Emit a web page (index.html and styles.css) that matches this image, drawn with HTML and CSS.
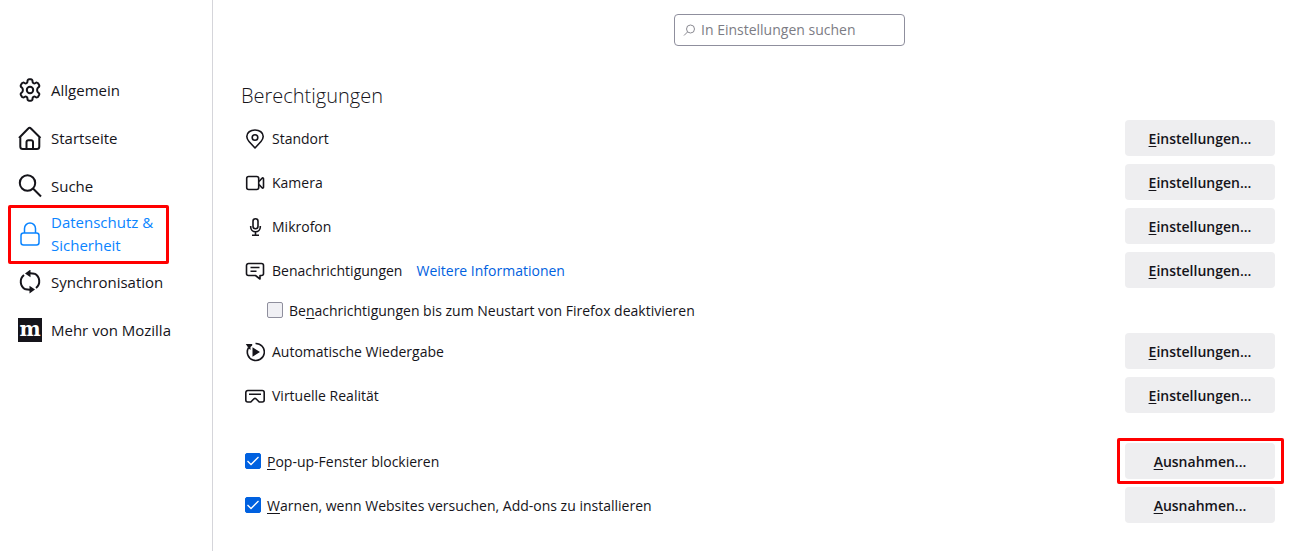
FILE: index.html
```html
<!DOCTYPE html>
<html lang="de">
<head>
  <meta charset="UTF-8" />
  <meta name="viewport" content="width=device-width, initial-scale=1.0" />
  <title>Einstellungen</title>
  <link rel="stylesheet" href="styles.css">
</head>
<body>

  <nav class="sidebar">
    <a class="category" href="#allgemein">
      <svg class="category-icon" viewBox="0 0 24 24"><path d="M9.500 3.200a1.800 1.800 0 0 1 1.700-2h1.600a1.800 1.800 0 0 1 1.700 2c0 1.900 1.500 2.700 3.100 1.800a1.800 1.800 0 0 1 2.600.4l.9 1.500a1.800 1.800 0 0 1-.8 2.500c-1.600 1-1.600 4.200 0 5.200a1.800 1.800 0 0 1 .8 2.500l-.9 1.500a1.800 1.800 0 0 1-2.600.4c-1.600-.9-3.100-.1-3.100 1.800a1.800 1.800 0 0 1-1.700 2h-1.600a1.800 1.800 0 0 1-1.700-2c0-1.900-1.500-2.700-3.100-1.800a1.800 1.800 0 0 1-2.600-.4l-.9-1.500a1.800 1.800 0 0 1 .8-2.500c1.600-1 1.600-4.200 0-5.200a1.800 1.800 0 0 1-.8-2.500l.9-1.500A1.800 1.800 0 0 1 6.400 5c1.600.9 3.100.1 3.100-1.800z"/><circle cx="12" cy="12" r="3.200"/></svg>
      <span>Allgemein</span>
    </a>
    <a class="category" href="#startseite">
      <svg class="category-icon" viewBox="0 0 24 24"><path d="M1 12 10.500 2.200a1.500 1.500 0 0 1 2.200 0L22.500 12M2.300 11v9.500a2.500 2.500 0 0 0 2.500 2.500h14a2.500 2.500 0 0 0 2.500-2.500V11M8.500 22.500V16a1.800 1.800 0 0 1 1.800-1.800h2.900A1.800 1.800 0 0 1 15 16v6.500"/></svg>
      <span>Startseite</span>
    </a>
    <a class="category" href="#suche">
      <svg class="category-icon" viewBox="0 0 24 24"><circle cx="9.500" cy="9" r="7.700"/><path d="m15 14.500 8 8"/></svg>
      <span>Suche</span>
    </a>
    <a class="category selected" href="#datenschutz">
      <svg class="category-icon" viewBox="0 0 24 24"><rect x="3" y="11" width="18" height="12" rx="2.500"/><path d="M6.500 11V6.500a5.500 5.500 0 0 1 11 0V11"/></svg>
      <span>Datenschutz &amp; Sicherheit</span>
    </a>
    <a class="category" href="#sync">
      <svg class="category-icon" viewBox="0 0 24 24"><path d="M7.500 19.300A8.500 8.500 0 0 1 6 5M16.500 3.700A8.500 8.500 0 0 1 18 18M11 3.300c1.500-.1 3.500 0 5.500.4M13 19.700c-1.500.1-3.500 0-5.500-.4"/><path class="solid" d="M12.500-.5v7.700L7 3.400zM11.500 23.500v-7.700l5.500 3.800z"/></svg>
      <span>Synchronisation</span>
    </a>
    <a class="category" href="#mozilla">
      <svg class="category-icon" viewBox="0 0 24 24"><rect class="solid" width="24" height="24"/><text class="mark" x="12" y="18" text-anchor="middle">m</text></svg>
      <span>Mehr von Mozilla</span>
    </a>
  </nav>

  <main class="content">
    <div class="search-row">
      <label class="search-box">
        <svg class="search-icon" viewBox="0 0 13 13"><circle cx="7.500" cy="5" r="4"/><path d="M4.500 8 1 11.500"/></svg>
        <input class="search-input" type="search" placeholder="In Einstellungen suchen" aria-label="In Einstellungen suchen" />
      </label>
    </div>

    <h1 class="heading">Berechtigungen</h1>

    <div class="row">
      <svg class="icon" viewBox="0 0 20 20"><path d="M10 19 4 12.500a8 8 0 0 1-2.200-5C1.800 3.500 5.500 1 10 1s8.200 2.500 8.200 6.500a8 8 0 0 1-2.200 5z"/><circle cx="10" cy="8.500" r="2.800"/></svg>
      <span class="label">Standort</span>
      <button class="button"><u>E</u>instellungen...</button>
    </div>
    <div class="row">
      <svg class="icon" viewBox="0 0 20 20"><rect x="1.700" y="3.500" width="12" height="13" rx="2"/><path d="m14 8.500 3-3.300c.6-.6 1.500-.3 1.500.5v8.600c0 .8-.9 1.100-1.500.5l-3-3.300"/></svg>
      <span class="label">Kamera</span>
      <button class="button"><u>E</u>instellungen...</button>
    </div>
    <div class="row">
      <svg class="icon" viewBox="0 0 20 20"><rect x="8" y="1.800" width="5" height="10" rx="2.500"/><path d="M5.700 9v1a4.800 4.800 0 0 0 9.600 0V9M10.500 15v3M7 18.200h7"/></svg>
      <span class="label">Mikrofon</span>
      <button class="button"><u>E</u>instellungen...</button>
    </div>
    <div class="row">
      <svg class="icon" viewBox="0 0 20 20"><path d="M3.500 2.500h13a2 2 0 0 1 2 2v8a2 2 0 0 1-2 2H15V18l-4.500-3.500h-7a2 2 0 0 1-2-2v-8a2 2 0 0 1 2-2zM5.500 6.500h9M5.500 10.200h6"/></svg>
      <span class="label">Benachrichtigungen</span>
      <a class="link" href="#info">Weitere Informationen</a>
      <button class="button"><u>E</u>instellungen...</button>
    </div>
    <div class="row indent">
      <input class="checkbox" type="checkbox" id="pause" />
      <label for="pause">Be<u>n</u>achrichtigungen bis zum Neustart von Firefox deaktivieren</label>
    </div>
    <div class="row">
      <svg class="icon" viewBox="0 0 20 20"><path d="M10.500 1.500a8.500 8.500 0 1 1-7 4.200"/><path class="solid" d="M7.500 5.200 15 10l-7.500 4.800zM.8 2h6.400v1.500L5.500 5v3L3.800 6.500z"/></svg>
      <span class="label">Automatische Wiedergabe</span>
      <button class="button"><u>E</u>instellungen...</button>
    </div>
    <div class="row">
      <svg class="icon" viewBox="0 0 20 20"><path d="M2.800 4.500h14.400a2 2 0 0 1 2 2V14a2 2 0 0 1-2 2h-3L11 12.800a1.500 1.500 0 0 0-2 0L5.800 16h-3a2 2 0 0 1-2-2V6.500a2 2 0 0 1 2-2zM4 8.200h12"/></svg>
      <span class="label">Virtuelle Realität</span>
      <button class="button"><u>E</u>instellungen...</button>
    </div>

    <div class="row group-start">
      <input class="checkbox" type="checkbox" id="popup" checked />
      <label for="popup"><u>P</u>op-up-Fenster blockieren</label>
      <button class="button marked"><u>A</u>usnahmen...</button>
    </div>
    <div class="row">
      <input class="checkbox" type="checkbox" id="addons" checked />
      <label for="addons"><u>W</u>arnen, wenn Websites versuchen, Add-ons zu installieren</label>
      <button class="button"><u>A</u>usnahmen...</button>
    </div>
  </main>

</body>
</html>
```
FILE: styles.css
```css
* {
  box-sizing: border-box;
}

body {
  margin: 0;
  min-height: 100vh;
  display: flex;
  background: #fff;
  color: #15141a;
  font-family: "Open Sans", "Noto Sans", sans-serif;
  font-size: 14px;
  line-height: 22px;
}

svg {
  flex: none;
  fill: none;
  stroke: currentColor;
  stroke-linejoin: round;
}

.solid {
  fill: currentColor;
  stroke: none;
}

u {
  text-underline-offset: 2px;
}

/* Sidebar */
.sidebar {
  flex: none;
  width: 213px;
  padding-top: 66px;
  border-right: 1px solid #d5d5da;
}

.category {
  position: relative;
  display: flex;
  align-items: center;
  gap: 9px;
  height: 48px;
  padding: 0 32px 0 18px;
  color: inherit;
  font-size: 15px;
  line-height: 23px;
  text-decoration: none;
}

.category-icon {
  width: 24px;
  height: 24px;
  stroke-width: 2;
}

.mark {
  fill: #fff;
  stroke: none;
  font-family: "DejaVu Serif", serif;
  font-size: 20px;
  font-weight: bold;
}

.selected {
  padding-right: 48px;
  color: #0a84ff;
}

.selected .category-icon {
  stroke-width: 1.5;
}

.selected::after,
.marked::after {
  content: "";
  position: absolute;
  border: 3px solid #f00;
  border-radius: 2px;
}

.selected::after {
  inset: -5px 43px -6px 8px;
}

/* Main pane */
.content {
  flex: 1;
  padding: 14px 24px 28px 28px;
}

.search-row {
  display: flex;
  justify-content: flex-end;
  max-width: 664px;
}

.search-box {
  display: flex;
  align-items: center;
  gap: 5px;
  width: 231px;
  height: 32px;
  padding: 0 8px;
  border: 1px solid #8f8f9d;
  border-radius: 4px;
  color: #8a8a92;
}

.search-icon {
  width: 13px;
  height: 13px;
}

.search-input {
  flex: 1;
  min-width: 0;
  padding: 0;
  border: 0;
  outline: 0;
  background: none;
  font: inherit;
}

.search-input::placeholder {
  color: #7c7c84;
}

.heading {
  margin: 34px 0 9px;
  font-size: 20px;
  font-weight: 300;
  line-height: 31px;
}

.row {
  display: flex;
  align-items: center;
  gap: 6px;
  min-height: 36px;
  margin-bottom: 8px;
  padding-left: 4px;
}

.row .icon,
.row span,
.row a,
.row label {
  margin-top: 2px;
}

.icon {
  width: 20px;
  height: 20px;
  stroke-width: 1.6;
}

.label {
  margin-left: 1px;
}

.link {
  margin-left: 8px;
  color: #0061e0;
  text-decoration: none;
}

.indent {
  min-height: 28px;
  margin-bottom: 9px;
  padding-left: 26px;
}

.group-start {
  margin-top: 30px;
}

.checkbox {
  appearance: none;
  flex: none;
  width: 16px;
  height: 16px;
  margin: 0;
  border: 1px solid #8f8f9d;
  border-radius: 2px;
  background: #f0f0f4;
}

.checkbox:checked {
  border-color: #0061e0;
  background: #0061e0 url("data:image/svg+xml,%3Csvg xmlns='http://www.w3.org/2000/svg' viewBox='0 0 14 14'%3E%3Cpath d='M1.500 7 5 10.500l7.500-7.500' fill='none' stroke='white' stroke-width='1.300'/%3E%3C/svg%3E");
}

.button {
  position: relative;
  width: 150px;
  height: 36px;
  margin-left: auto;
  padding: 2px 8px 0;
  border: 0;
  border-radius: 4px;
  background: #eeeef0;
  color: inherit;
  font: inherit;
  font-weight: 600;
}

.marked::after {
  inset: -5px -9px -5px -8px;
}
```
